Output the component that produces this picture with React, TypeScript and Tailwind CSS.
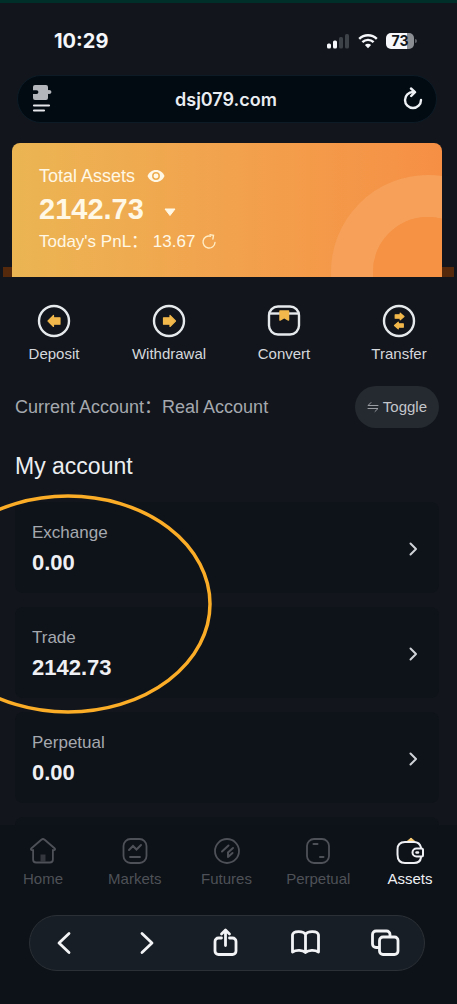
import type { ReactNode } from 'react';

/* ─── Status bar ─────────────────────────────────────────────────── */
function StatusBar() {
  return (
    <div className="flex h-[72px] items-center justify-between pt-1 pl-[54px] pr-10 font-['Inter',sans-serif] text-[#f5f7fa]">
      <span className="text-xl font-bold">10:29</span>
      <div className="flex items-center gap-2">
        <svg className="h-4 w-6" viewBox="0 0 24 16" aria-hidden="true">
          <rect x="1" y="10.5" width="4" height="5" rx="1.5" fill="#f5f7fa" />
          <rect x="7" y="7.5" width="4" height="8" rx="1.5" fill="#f5f7fa" />
          <rect x="13" y="4" width="4" height="11.5" rx="1.5" fill="#3d4148" />
          <rect x="19" y="1" width="4" height="14.5" rx="1.5" fill="#3d4148" />
        </svg>
        <svg className="h-4 w-5" viewBox="0 0 20 16" fill="none" stroke="#f5f7fa" strokeWidth="2.4" aria-hidden="true">
          <path d="M1.2 5.8a12.6 12.6 0 0 1 17.6 0" />
          <path d="M4.4 9.2a8 8 0 0 1 11.2 0" />
          <path d="M10 15.2 6.9 12a4.4 4.4 0 0 1 6.2 0Z" fill="#f5f7fa" stroke="none" />
        </svg>
        <div className="flex items-center gap-px">
          <span className="flex h-4 w-7 items-center justify-center rounded-[5px] bg-linear-to-r from-[#f5f7fa] from-75% to-[#8b8e93] to-75% text-sm font-bold text-[#11151c]">
            73
          </span>
          <span className="h-1 w-0.5 rounded-r-full bg-[#5d6066]" />
        </div>
      </div>
    </div>
  );
}

/* ─── Browser address bar ────────────────────────────────────────── */
function AddressBar() {
  return (
    <div className="ml-[17px] mr-5 flex h-12 items-center justify-between rounded-full border border-[#0c1b26] bg-[#020a12] pl-3.5 pr-3 font-['Inter',sans-serif]">
      <button type="button" aria-label="Page menu">
        <svg className="h-7 w-5" viewBox="0 0 20 28">
          <path
            d="M3 0h11a2 2 0 0 1 2 2v3.200c1.800-.6 3.400.200 3.400 1.800s-1.600 2.400-3.400 1.800V13a2 2 0 0 1-2 2H3a2 2 0 0 1-2-2V9h3.500a1.900 1.900 0 1 0 0-3.800H1V2a2 2 0 0 1 2-2Z"
            fill="#b3b6ba"
          />
          <path d="M2 20.500h15M2 25.500h10" stroke="#e4e6e9" strokeWidth="2.200" strokeLinecap="round" />
        </svg>
      </button>
      <span className="pt-0.5 text-lg font-semibold text-[#e9edf1]">dsj079.com</span>
      <button type="button" aria-label="Reload">
        <svg className="h-6 w-6" viewBox="0 0 24 24" fill="none" stroke="#eef1f4" strokeWidth="2.400" strokeLinecap="round" strokeLinejoin="round">
          <path d="M13 5a8 8 0 1 0 8 8" />
          <path d="m11 1.500 4 3.700-3.800 3.800" />
        </svg>
      </button>
    </div>
  );
}

/* ─── Total assets banner ────────────────────────────────────────── */
function AssetsBanner() {
  return (
    <section className="mx-[3px] mt-5 bg-[linear-gradient(to_top,#55290c_10px,transparent_10px)]">
      <div className="relative ml-[9px] mr-3 h-[134px] overflow-hidden rounded-t-lg bg-linear-to-r from-[#ebb553] via-[#f2a24d] to-[#f68f44] pl-[27px] pt-[23px] text-[#fff8e6]">
        <svg className="absolute right-0 bottom-0 h-[104px] w-[112px]" viewBox="0 0 112 104" aria-hidden="true">
          <circle cx="98" cy="99" r="76" fill="none" stroke="#f6a05a" strokeWidth="42" />
          <circle cx="98" cy="99" r="55" fill="#f69244" />
        </svg>
        <div className="relative">
          <div className="flex h-5 items-center gap-3 text-lg">
            Total Assets
            <button type="button" aria-label="Hide balance">
              <svg className="h-3.5 w-[18px]" viewBox="0 0 18 14">
                <path d="M9 1C5 1 2 3.500.5 7 2 10.500 5 13 9 13s7-2.500 8.500-6C16 3.500 13 1 9 1Z" fill="#fff8e6" />
                <circle cx="9" cy="7" r="3.200" fill="#fff8e6" stroke="#eeae50" strokeWidth="1.500" />
              </svg>
            </button>
          </div>
          <div className="mt-2 flex h-8 items-center gap-5 text-[29px] font-bold">
            2142.73
            <button type="button" aria-label="Choose currency">
              <svg className="mt-1 h-2 w-3" viewBox="0 0 12 8">
                <path d="M1 1h10L6 7.500Z" fill="#fff8e6" stroke="#fff8e6" strokeLinejoin="round" />
              </svg>
            </button>
          </div>
          <div className="mt-1 flex h-6 items-center gap-1.5 text-[17px]">
            <span>Today&apos;s PnL： 13.67</span>
            <button type="button" aria-label="Refresh PnL">
              <svg className="h-4 w-4" viewBox="0 0 16 16" fill="none" stroke="#ffecc4" strokeWidth="1.400" strokeLinecap="round">
                <path d="M9.500 2.200A6 6 0 1 0 14 8.500" />
                <path d="m9 .8 3.500.6-.6 3.600" />
              </svg>
            </button>
          </div>
        </div>
      </div>
    </section>
  );
}

/* ─── Quick actions ──────────────────────────────────────────────── */
const arrow = 'M0 0l5.500-5.500v2.300h6.500v6.400H5.500v2.300Z';

const actions: { label: string; icon: ReactNode }[] = [
  {
    label: 'Deposit',
    icon: (
      <>
        <circle cx="17" cy="17" r="15" />
        <path d={arrow} transform="translate(11 17)" fill="#f2b84b" stroke="#f2b84b" strokeWidth="1.200" strokeLinejoin="round" />
      </>
    ),
  },
  {
    label: 'Withdrawal',
    icon: (
      <>
        <circle cx="17" cy="17" r="15" />
        <path d={arrow} transform="matrix(-1 0 0 1 23.500 17)" fill="#f2b84b" stroke="#f2b84b" strokeWidth="1.200" strokeLinejoin="round" />
      </>
    ),
  },
  {
    label: 'Convert',
    icon: (
      <>
        <rect x="2" y="2.500" width="30" height="28" rx="9" />
        <path d="M3 9.500h28" />
        <path d="M13 7h8.500v9L17.200 13.500 13 16Z" fill="#f2b84b" stroke="#f2b84b" strokeWidth="1.500" strokeLinejoin="round" />
      </>
    ),
  },
  {
    label: 'Transfer',
    icon: (
      <>
        <circle cx="17" cy="17" r="15" />
        <path d="m22 12.500-3.800-3.300v1.600h-5v3.400h5v1.600ZM12.500 21.500l3.800-3.300v1.600h5v3.400h-5v1.600Z" fill="#f2b84b" stroke="#f2b84b" strokeWidth="1.200" strokeLinejoin="round" />
      </>
    ),
  },
];

function QuickActions() {
  return (
    <nav className="mt-[27px] flex justify-between pl-3.5 pr-[18px]">
      {actions.map(({ label, icon }) => (
        <button key={label} type="button" className="flex w-20 flex-col items-center gap-1.5 text-[15px] text-[#d5d8dc]">
          <svg className="h-[34px] w-[34px]" viewBox="0 0 34 34" fill="none" stroke="#e6e9ec" strokeWidth="2.400">
            {icon}
          </svg>
          <span className="leading-5">{label}</span>
        </button>
      ))}
    </nav>
  );
}

/* ─── Accounts ───────────────────────────────────────────────────── */
const accounts = [
  { name: 'Exchange', amount: '0.00' },
  { name: 'Trade', amount: '2142.73' },
  { name: 'Perpetual', amount: '0.00' },
];

function Accounts() {
  return (
    <section className="relative grow overflow-hidden pl-[15px] pr-[18px]">
      <h2 className="mt-6 text-[23px] leading-7 text-[#eceef1]">My account</h2>
      <ul className="mt-[22px] flex flex-col gap-3.5">
        {accounts.map(({ name, amount }) => (
          <li key={name}>
            <button type="button" className="flex h-[91px] w-full items-center justify-between rounded-lg bg-[#0e1219] pt-0.5 pl-[17px] pr-5 text-left">
              <span className="flex flex-col gap-1">
                <span className="text-[17px] leading-6 text-[#a5a9af]">{name}</span>
                <span className="text-[22px] leading-7 font-bold text-[#eef0f3]">{amount}</span>
              </span>
              <svg className="h-3.5 w-3" viewBox="0 0 12 14" fill="none" stroke="#d0d3d7" strokeWidth="2" strokeLinecap="round" strokeLinejoin="round">
                <path d="m3.500 1.500 5.500 5.500-5.500 5.500" />
              </svg>
            </button>
          </li>
        ))}
        <li className="h-2 rounded-t-lg bg-[#0e1219]" />
      </ul>
      {/* highlight ring round the first two accounts */}
      <svg className="pointer-events-none absolute top-[66px] -left-[77px] h-[222px] w-[290px]" viewBox="0 0 290 222" fill="none" aria-hidden="true">
        <ellipse cx="145" cy="110" rx="142" ry="108" stroke="#fbad27" strokeWidth="3.500" />
      </svg>
    </section>
  );
}

/* ─── App tab bar ────────────────────────────────────────────────── */
const tabs: { label: string; active?: boolean; icon: ReactNode }[] = [
  {
    label: 'Home',
    icon: (
      <>
        <path d="M12.300 2.800a2.500 2.500 0 0 1 3.400 0l9.800 8.400c1 .9.600 2-.6 2h-1v9.300a3 3 0 0 1-3 3H7.100a3 3 0 0 1-3-3v-9.300h-1c-1.200 0-1.600-1.100-.6-2Z" />
        <path d="M11.500 17.500h5v7h-5Z" fill="currentColor" stroke="none" opacity=".6" />
      </>
    ),
  },
  {
    label: 'Markets',
    icon: (
      <>
        <rect x="2.500" y="2" width="23" height="24" rx="7" />
        <path d="m8 13 4-4 3.500 3.500L20 8" strokeWidth="2" />
        <path d="M9 20h10" />
      </>
    ),
  },
  {
    label: 'Futures',
    icon: (
      <>
        <circle cx="14" cy="14" r="12" />
        <path d="m9 14.500 6.500-6M15 20v-4.500l5-4.500M15 20l4.500-4" strokeWidth="2" />
      </>
    ),
  },
  {
    label: 'Perpetual',
    icon: (
      <>
        <rect x="3" y="2" width="22" height="24" rx="7" />
        <path d="M9.500 7h4M16 20h3.500" strokeWidth="2" />
      </>
    ),
  },
  {
    label: 'Assets',
    active: true,
    icon: (
      <>
        <path d="m11 4.500 4-3.500 4 3.500Z" fill="#f6ca72" stroke="#f6ca72" strokeWidth="1" />
        <path d="M25 10.500C24 6.500 21.500 5 18 5H9C4 5 1.500 8 1.500 12.500v5C1.500 23 4 26 9 26h9c4 0 6.500-2 7-5.500" strokeWidth="2" />
        <path d="M25.500 11.500h-5a4 4 0 0 0 0 8h5c1 0 1.500-.5 1.500-1.500v-5c0-1-.5-1.500-1.500-1.500Z" strokeWidth="2" strokeLinejoin="round" />
        <path d="M20.500 15.500h1.500" strokeWidth="2.400" />
      </>
    ),
  },
];

function TabBar() {
  return (
    <nav className="flex justify-between bg-[#0d1118] pl-[7px] pr-[11px] pt-3">
      {tabs.map(({ label, active, icon }) => (
        <a
          key={label}
          href="#"
          aria-current={active ? 'page' : undefined}
          className={`flex w-[72px] flex-col items-center gap-1 text-[15px] ${active ? 'text-[#eef0f3]' : 'text-[#4e5157]'}`}
        >
          <svg className="h-7 w-7" viewBox="0 0 28 28" fill="none" stroke="currentColor" strokeWidth="1.800" strokeLinecap="round">
            {icon}
          </svg>
          <span className="leading-5">{label}</span>
        </a>
      ))}
    </nav>
  );
}

/* ─── Browser toolbar ────────────────────────────────────────────── */
const tools = [
  { label: 'Back', d: 'M20 5.500 10 15l10 9.500' },
  { label: 'Forward', d: 'M13 5.500 23 15l-10 9.500' },
  { label: 'Share', d: 'M11.500 10H8.500a3.500 3.500 0 0 0-3.500 3.500V23a3.500 3.500 0 0 0 3.500 3.500h14A3.500 3.500 0 0 0 26 23v-9.500a3.500 3.500 0 0 0-3.500-3.500h-3M15.500 17.500V2.500M11.500 6l4-4 4 4' },
  { label: 'Bookmarks', d: 'M15.500 6.500v18C12.500 22 6.500 21.500 2.500 24V7c.5-4.500 11-4.500 13-.5 2-4 12.500-4 13 .5v17c-4-2.500-10-2-13 .5' },
  { label: 'Open tabs', d: 'M9.500 19.500H6A3.500 3.500 0 0 1 2.500 16V6.500A3.500 3.500 0 0 1 6 3h10.500A3.500 3.500 0 0 1 20 6.500V9M13 9h11.500a3.500 3.500 0 0 1 3.500 3.500V23a3.500 3.500 0 0 1-3.500 3.500H13A3.500 3.500 0 0 1 9.500 23V12.500A3.500 3.500 0 0 1 13 9Z' },
];

function BrowserToolbar() {
  return (
    <div className="bg-[#0d1118] pt-[26px] pb-[33px] pl-[29px] pr-8">
      <div className="flex h-14 items-center justify-between rounded-full border border-[#2a3036] bg-[#181e25] pl-3.5 pr-[19px]">
        {tools.map(({ label, d }) => (
          <button key={label} type="button" aria-label={label} className="flex w-10 justify-center">
            <svg className="h-[30px] w-[30px]" viewBox="0 0 30 30" fill="none" stroke="#f1f3f5" strokeWidth="2.800" strokeLinecap="round" strokeLinejoin="round">
              <path d={d} />
            </svg>
          </button>
        ))}
      </div>
    </div>
  );
}

export default function App() {
  return (
    <div className="flex min-h-screen flex-col border-t-[3px] border-b border-t-[#002f2a] border-b-[#06251f] bg-[#12161c] font-['Liberation_Sans','Noto_Sans_CJK_SC',sans-serif]">
      <StatusBar />
      <AddressBar />
      <AssetsBanner />
      <QuickActions />
      <div className="mt-[22px] flex items-center justify-between pl-[15px] pr-[18px] text-lg text-[#a5a9af]">
        <p>Current Account：Real Account</p>
        <button type="button" className="flex h-[42px] items-center gap-1 rounded-full bg-[#252930] px-3 text-[15px] text-[#c3c6ca]">
          <svg className="h-3 w-3" viewBox="0 0 12 12" fill="none" stroke="#9a9da2" strokeLinecap="round" aria-hidden="true">
            <path d="M4 1.500 1 4.500h10M8 10.500l3-3H1" />
          </svg>
          Toggle
        </button>
      </div>
      <Accounts />
      <TabBar />
      <BrowserToolbar />
    </div>
  );
}
